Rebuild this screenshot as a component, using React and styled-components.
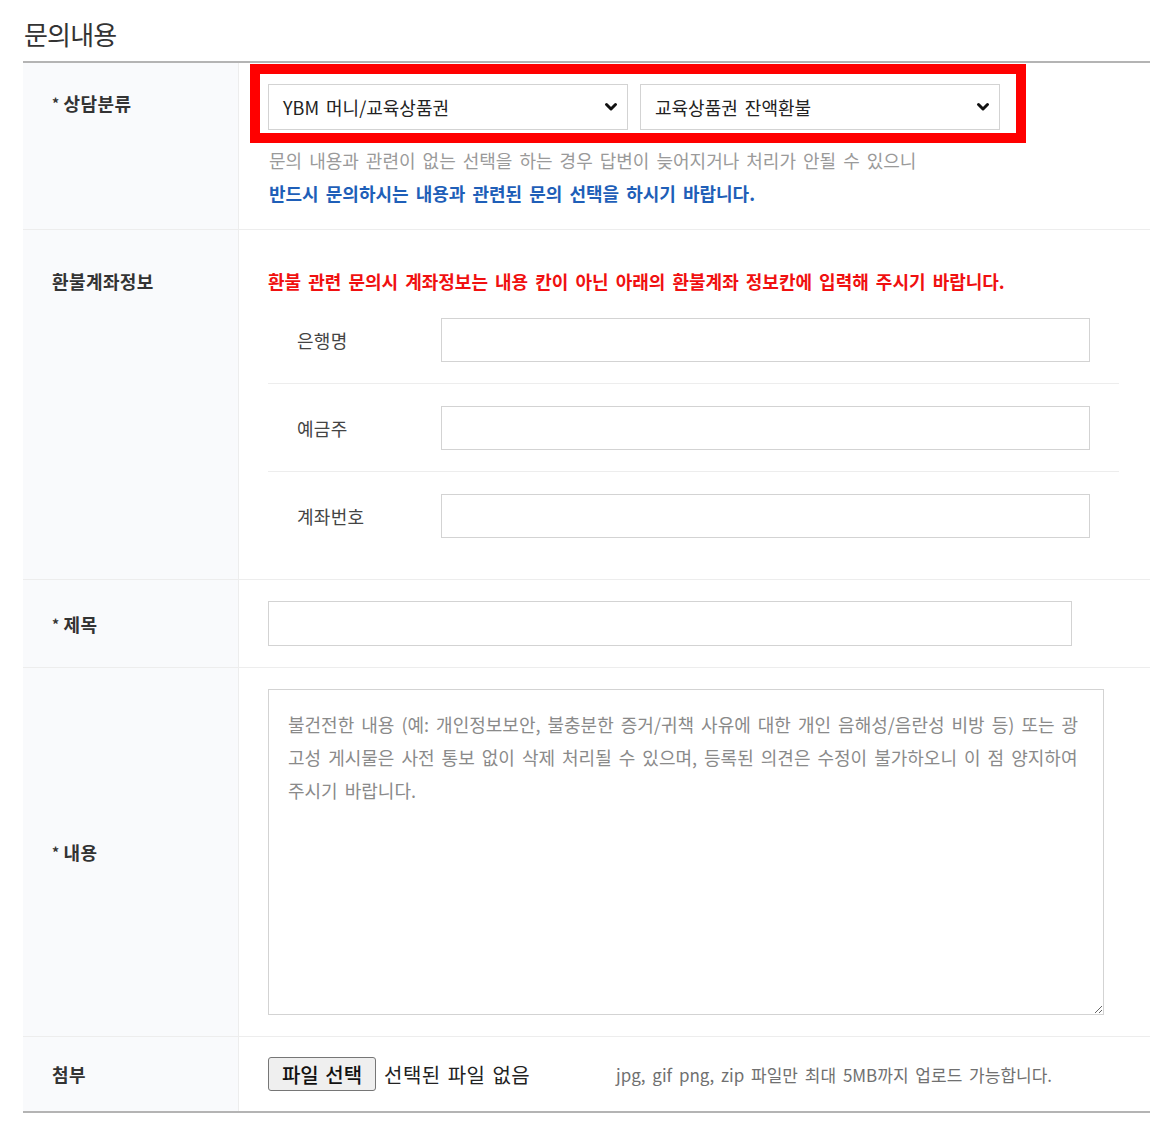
import React from "react";
import styled, { createGlobalStyle } from "styled-components";

const GlobalStyle = createGlobalStyle`
  body {
    margin: 0;
    background: #fff;
    font-family: "Noto Sans CJK KR", "Noto Sans", sans-serif;
    color: #333;
  }
`;

const Page = styled.div`
  width: 1127px;
  margin-left: 23px;
  padding-top: 15px;
`;

const Heading = styled.h2`
  margin: 0;
  padding-left: 1px;
  height: 46px;
  font-size: 26px;
  font-weight: 400;
  color: #333;
  line-height: 38px;
  letter-spacing: -0.8px;
  border-bottom: 2px solid #b4b4b4;
`;

const Table = styled.div`
  border-bottom: 2px solid #b4b4b4;
`;

const Row = styled.div`
  display: grid;
  grid-template-columns: 216px 1fr;
  border-top: ${(p) => (p.$first ? "none" : "1px solid #ededed")};
`;

const LabelCell = styled.div`
  background: #f9fafc;
  border-right: 1px solid #ededed;
  padding-left: 29px;
  padding-top: ${(p) => p.$top || 0}px;
  display: flex;
  align-items: ${(p) => (p.$top ? "flex-start" : "center")};
  font-size: 18px;
  font-weight: 700;
  color: #333;
  letter-spacing: 0.4px;
  line-height: 24px;
`;

const Star = styled.span`
  font-size: 14px;
  margin-right: 4px;
`;

const ContentCell = styled.div`
  padding: ${(p) => p.$pad || "21px 0 21px 29px"};
`;

const SelectFrame = styled.div`
  width: fit-content;
  margin-left: -19px;
  border: 10px solid #ff0000;
  padding: 10px 16px 3px 8px;
  display: flex;
  gap: 12px;
`;

const SelectBox = styled.div`
  width: 360px;
  height: 46px;
  box-sizing: border-box;
  border: 1px solid #d3d3d3;
  background: #fff;
  display: flex;
  align-items: center;
  justify-content: space-between;
  padding: 0 9px 0 14px;
  font-size: 18px;
  color: #222;
  word-spacing: 3px;
`;

const Hint = styled.p`
  margin: 1px 0 0;
  font-size: 18px;
  line-height: 32px;
  color: ${(p) => (p.$blue ? "#1f5fb8" : "#9a9a9a")};
  font-weight: ${(p) => (p.$blue ? 700 : 400)};
  word-spacing: 3px;
`;

const Notice = styled.p`
  margin: 0 0 3px;
  font-size: 18px;
  line-height: 24px;
  font-weight: 700;
  color: #f01010;
  word-spacing: 3px;
`;

const SubRow = styled.div`
  width: 851px;
  display: grid;
  grid-template-columns: 173px 649px;
  align-items: center;
  padding: 22px 0 21px;
  border-bottom: ${(p) => (p.$last ? "none" : "1px solid #ededed")};
`;

const SubLabel = styled.span`
  padding-left: 29px;
  font-size: 18px;
  color: #444;
  letter-spacing: 0.3px;
`;

const TextInput = styled.input`
  display: block;
  box-sizing: border-box;
  width: ${(p) => p.$w}px;
  height: ${(p) => p.$h || 45}px;
  border: 1px solid #d3d3d3;
  border-radius: 0;
  background: #fff;
  outline: none;
  padding: 0 14px;
  font-family: inherit;
  font-size: 17px;
`;

const TextArea = styled.textarea`
  display: block;
  box-sizing: border-box;
  width: 836px;
  height: 326px;
  border: 1px solid #d3d3d3;
  border-radius: 0;
  outline: none;
  padding: 18px 19px;
  font-family: "Noto Sans CJK KR", "Noto Sans", sans-serif;
  font-size: 18px;
  line-height: 33px;
  word-spacing: 3px;
  color: #333;
  &::placeholder {
    color: #8a8a8a;
  }
`;

const FileLine = styled.div`
  display: flex;
  align-items: center;
`;

const FileButton = styled.button`
  width: 108px;
  height: 34px;
  background: #efefef;
  border: 1px solid #767676;
  border-radius: 3px;
  font-family: "Noto Sans CJK KR", sans-serif;
  font-size: 20px;
  font-weight: 500;
  color: #111;
  padding: 0;
  word-spacing: 2px;
`;

const FileStatus = styled.span`
  margin-left: 8px;
  width: 232px;
  font-size: 20px;
  color: #222;
  letter-spacing: 0.5px;
  word-spacing: 2px;
`;

const FileNote = styled.span`
  font-size: 17px;
  color: #707070;
  word-spacing: 3px;
`;

const Chevron = () => (
  <svg width="14" height="10" viewBox="0 0 14 10">
    <path d="M2.5 2.5 L7 7 L11.5 2.5" fill="none" stroke="#111" strokeWidth="3" strokeLinecap="round" strokeLinejoin="round" />
  </svg>
);

const bankFields = ["은행명", "예금주", "계좌번호"];

const placeholder =
  "불건전한 내용 (예: 개인정보보안, 불충분한 증거/귀책 사유에 대한 개인 음해성/음란성 비방 등) 또는 광고성 게시물은 사전 통보 없이 삭제 처리될 수 있으며, 등록된 의견은 수정이 불가하오니 이 점 양지하여 주시기 바랍니다.";

export default function App() {
  return (
    <>
      <GlobalStyle />
      <Page>
        <Heading>문의내용</Heading>
        <Table>
          <Row $first>
            <LabelCell $top={28}>
              <Star>*</Star>상담분류
            </LabelCell>
            <ContentCell $pad="1px 0 20px 30px">
              <SelectFrame>
                <SelectBox>
                  YBM 머니/교육상품권
                  <Chevron />
                </SelectBox>
                <SelectBox>
                  교육상품권 잔액환불
                  <Chevron />
                </SelectBox>
              </SelectFrame>
              <Hint>문의 내용과 관련이 없는 선택을 하는 경우 답변이 늦어지거나 처리가 안될 수 있으니</Hint>
              <Hint $blue>반드시 문의하시는 내용과 관련된 문의 선택을 하시기 바랍니다.</Hint>
            </ContentCell>
          </Row>

          <Row>
            <LabelCell $top={39}>환불계좌정보</LabelCell>
            <ContentCell $pad="39px 0 20px 29px">
              <Notice>환불 관련 문의시 계좌정보는 내용 칸이 아닌 아래의 환불계좌 정보칸에 입력해 주시기 바랍니다.</Notice>
              {bankFields.map((f, i) => (
                <SubRow key={f} $last={i === bankFields.length - 1}>
                  <SubLabel>{f}</SubLabel>
                  <TextInput $w={649} $h={44} />
                </SubRow>
              ))}
            </ContentCell>
          </Row>

          <Row>
            <LabelCell>
              <Star>*</Star>제목
            </LabelCell>
            <ContentCell>
              <TextInput $w={804} />
            </ContentCell>
          </Row>

          <Row>
            <LabelCell>
              <Star>*</Star>내용
            </LabelCell>
            <ContentCell $pad="21px 0 21px 29px">
              <TextArea placeholder={placeholder} />
            </ContentCell>
          </Row>

          <Row>
            <LabelCell>첨부</LabelCell>
            <ContentCell $pad="20px 0 20px 29px">
              <FileLine>
                <FileButton>파일 선택</FileButton>
                <FileStatus>선택된 파일 없음</FileStatus>
                <FileNote>jpg, gif png, zip 파일만 최대 5MB까지 업로드 가능합니다.</FileNote>
              </FileLine>
            </ContentCell>
          </Row>
        </Table>
      </Page>
    </>
  );
}
